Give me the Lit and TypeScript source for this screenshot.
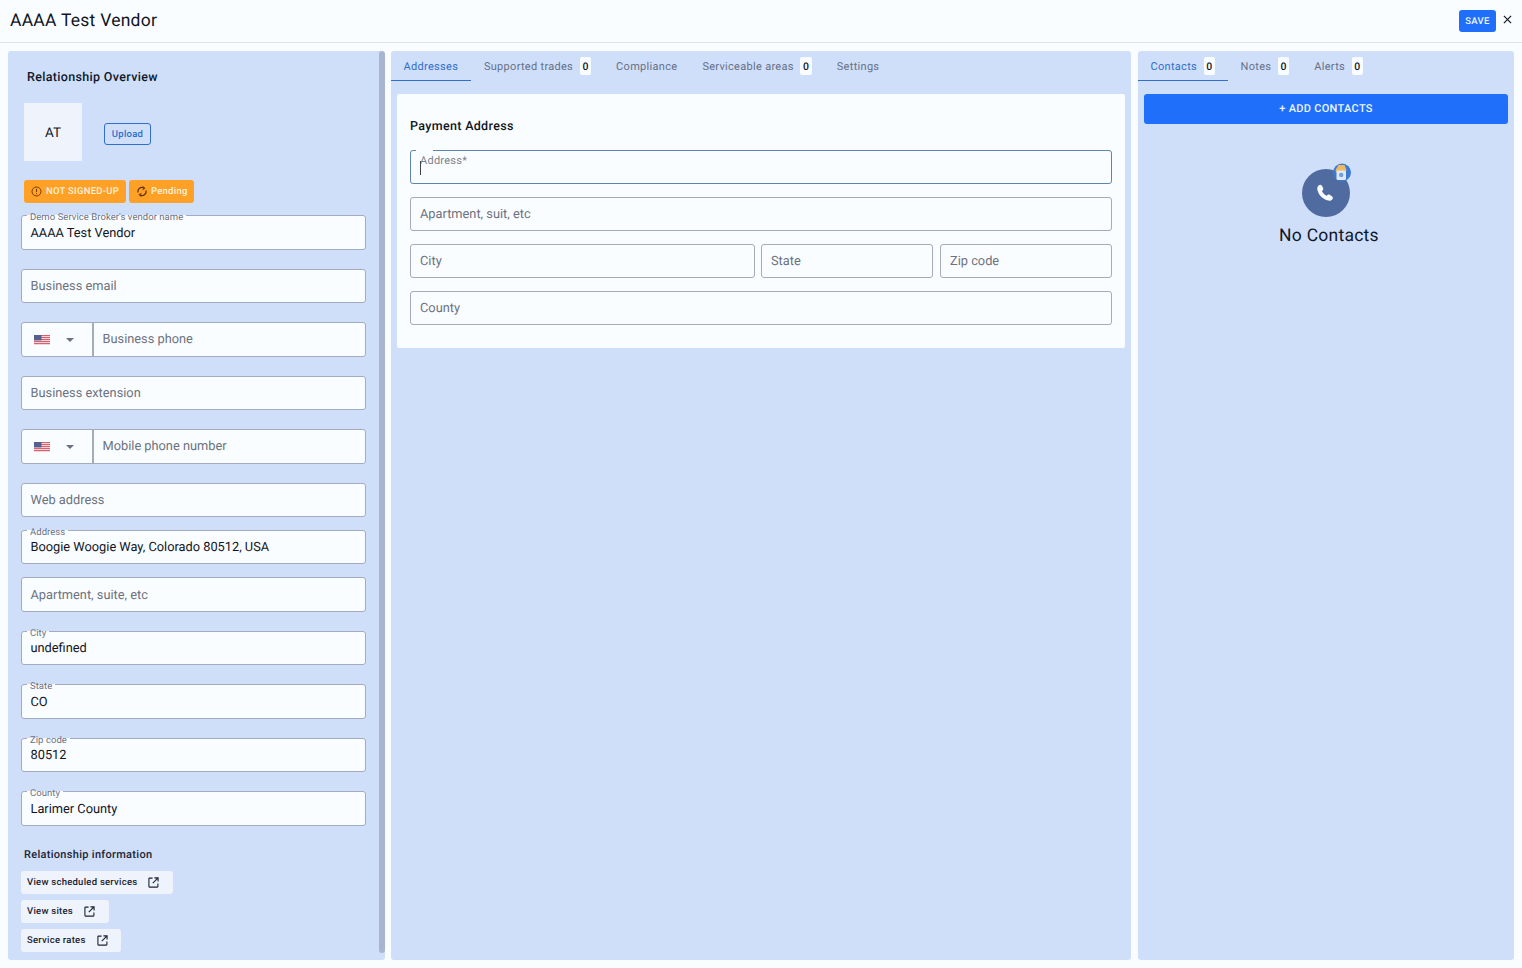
import { LitElement, html, css, svg } from "lit";
import { customElement } from "lit/decorators.js";

const flag = html`<svg class="flag" viewBox="0 0 16 10" width="16" height="10">
  <rect width="16" height="10" fill="#f3e3e8"/>
  ${[0, 2, 4, 6, 8].map((y) => svg`<rect y="${y}" width="16" height="1.1" fill="#d8616b"/>`)}
  <rect width="7.5" height="5.4" fill="#54618f"/>
</svg>`;

const ext = html`<svg class="ext" viewBox="0 0 12 12" width="11" height="11" fill="none" stroke="#1c2433" stroke-width="1.2">
  <path d="M5 1.2H1.6a.6.6 0 0 0-.6.6v8.6a.6.6 0 0 0 .6.6h8.6a.6.6 0 0 0 .6-.6V7"/>
  <path d="M7 1h4v4M11 1 5.2 6.8"/>
</svg>`;

@customElement("app-root")
export class AppRoot extends LitElement {
  static styles = css`
    :host {
      display: block;
      width: 1522px;
      height: 968px;
      overflow: hidden;
      background: #fafdff;
      font-family: Roboto, "Liberation Sans", sans-serif;
      color: #0f1729;
      text-rendering: geometricPrecision;
    }
    * { box-sizing: border-box; }
    .top {
      height: 43px;
      border-bottom: 1px solid #dfe3ea;
      display: flex;
      align-items: center;
      padding: 0 10px 2px 10px;
    }
    .title { font-size: 17.5px; letter-spacing: 0.25px; flex: 1; color: #10151f; padding-top: 2px; }
    .save {
      width: 37px; height: 22px; background: #1f6ffb; color: #f1f6ff; border-radius: 3px;
      font-size: 9.5px; font-weight: 500; letter-spacing: 0.3px;
      display: flex; align-items: center; justify-content: center; margin: 2px 7px 0 0;
    }
    .close { width: 9px; height: 9px; margin-bottom: 2px; }
    .main {
      display: flex; gap: 6px; padding: 8px 8px 0 8px; height: 917px;
    }
    .panel { background: #cfdffa; border-radius: 3px; height: 909px; position: relative; }
    .left { width: 377px; padding: 0 19px 0 13px; overflow: hidden; }
    .mid { width: 740px; }
    .right { width: 376px; margin-left: 1px; }
    .scroll {
      position: absolute; right: 0; top: 0; width: 6px; height: 902px;
      background: #a9b5cf; border-radius: 3px;
    }
    .h1 { font-size: 12.5px; font-weight: 500; letter-spacing: 0.33px; padding: 19px 0 0 6px; line-height: 15px; height: 33px; color: #0f1729; }
    .avatar-row { display: flex; align-items: center; margin: 19px 0 0 3px; }
    .avatar {
      width: 58px; height: 58px; background: #eff3fb; display: flex; align-items: center; justify-content: center;
      font-size: 13.5px; padding-top: 2px;
    }
    .upload {
      margin: 4px 0 0 22px; width: 47px; height: 22px; border: 1px solid #2f6fce; border-radius: 3px;
      color: #2f6fce; font-size: 9.5px; font-weight: 500; letter-spacing: 0.25px;
      display: flex; align-items: center; justify-content: center;
    }
    .tags { display: flex; gap: 3px; margin: 19px 0 0 3px; }
    .tag {
      height: 23px; background: #ffa126; border-radius: 3px; color: #fdf0d8;
      font-size: 9.5px; font-weight: 500; letter-spacing: 0.25px;
      display: flex; align-items: center; gap: 4px; padding: 0 7px 0 7px;
    }
    .tag.pending { gap: 4px; padding: 0 6px 0 8px; }
    .tag svg { flex: none; margin-bottom: 1px; }
    .fields { display: flex; flex-direction: column; margin-top: 12px; }
    .f {
      height: 34.5px; margin-bottom: 19px; border: 1px solid #a3abbd; border-radius: 3px;
      background: #fafdff; display: flex; align-items: center; position: relative;
      font-size: 12.8px; letter-spacing: 0; color: #10151f; padding: 2px 0 0 8.5px;
    }
    .f.tight { margin-bottom: 12.5px; }
    .f.tight13 { margin-bottom: 13px; }
    .ph { color: #6c7280; }
    .lab {
      position: absolute; left: 5px; top: -2px; padding: 0 3px; height: 10px; line-height: 8px;
      font-size: 9.5px; letter-spacing: 0.05px; color: #6c7280;
      background: linear-gradient(#cfdffa 1px, #fafdff 1px);
    }
    .phone { padding: 0; }
    .cc {
      width: 72px; height: 100%; border-right: 2px solid #a3abbd; display: flex; align-items: center;
      padding-left: 12px; flex: none;
    }
    .flag { margin-top: 2px; }
    .caret {
      width: 0; height: 0; border-left: 4.5px solid transparent; border-right: 4.5px solid transparent;
      border-top: 4.5px solid #6c7280; margin: 1px 0 0 16px;
    }
    .phone .ph { margin-left: 8.5px; padding-top: 1px; }
    .h2 { font-size: 11px; font-weight: 500; letter-spacing: 0.3px; margin: 3.5px 0 0 3px; line-height: 14px; color: #1c2433; }
    .links { display: flex; flex-direction: column; align-items: flex-start; gap: 6.5px; margin-top: 9px; }
    .link {
      height: 22.5px; background: #eff3fb; border-radius: 3px; padding: 0 13.5px 0 6px; display: flex; align-items: center; gap: 11px;
      font-size: 9.5px; font-weight: 500; letter-spacing: 0.25px; color: #1c2433;
    }
    .tabs { display: flex; height: 30px; }
    .tab {
      height: 30px; display: flex; align-items: center; gap: 6.5px; font-size: 11px; letter-spacing: 0.3px; color: #677088;
      padding: 1px 12.5px 0; border-bottom: 1px solid transparent;
    }
    .tab.on { color: #2f6fce; border-bottom-color: #2f6fce; padding-right: 13px; }
    .mid .tab.on { padding-right: 13.3px; }
    .n {
      width: 11.5px; height: 18px; background: #fafdff; border-radius: 2px; color: #10151f; font-size: 10.5px; font-weight: 500;
      display: flex; align-items: center; justify-content: center; letter-spacing: 0;
    }
    .card {
      margin: 13px 6px 0 6px; height: 254px; background: #fafdff; border-radius: 2px; padding: 25px 13px 0 13px;
      display: flex; flex-direction: column;
    }
    .card h2 { font-size: 12.5px; font-weight: 500; letter-spacing: 0.33px; margin: 0; line-height: 15px; color: #10151f; }
    .card .f { margin-bottom: 12.5px; flex: none; padding-left: 9px; }
    .card .row { display: flex; gap: 6px; }
    .card .row .f { flex: none; }
    .active {
      margin-top: 16px !important; height: 34px; border-color: #5d86ae; align-items: flex-start;
    }
    .notch { position: absolute; left: 5px; top: -2px; width: 17px; height: 4px; background: #fafdff; }
    .float { position: absolute; left: 9px; top: 4px; font-size: 11px; line-height: 12px; color: #7d8391; letter-spacing: 0.25px; }
    .caretline { position: absolute; left: 9px; top: 10px; width: 1px; height: 14px; background: #3c4250; }
    .add {
      margin: 13px 6px 0 6px; height: 30px; background: #1f6ffb; color: #eef4ff; border-radius: 3px;
      font-size: 11px; font-weight: 500; letter-spacing: 0.3px; display: flex; align-items: center; justify-content: center;
      padding-bottom: 2px;
    }
    .empty { display: flex; flex-direction: column; align-items: center; margin-top: 36px; }
    .ico { width: 60px; height: 60px; margin-left: 4px; }
    .nc { font-size: 17.5px; letter-spacing: 0.25px; margin-top: 5px; margin-left: 6px; line-height: 22px; color: #0f1729; }
  `;

  field(label: string, value: string, cls = "") {
    return html`<div class="f ${cls}">
      ${label ? html`<span class="lab">${label}</span>` : ""}
      <span class="${label ? "val" : "ph"}">${value}</span>
    </div>`;
  }

  phone(ph: string) {
    return html`<div class="f phone">
      <div class="cc">${flag}<span class="caret"></span></div>
      <span class="ph">${ph}</span>
    </div>`;
  }

  tab(name: string, count: number | null, on = false) {
    return html`<div class="tab ${on ? "on" : ""}">${name}${count !== null ? html`<span class="n">${count}</span>` : ""}</div>`;
  }

  render() {
    return html`
      <div class="top">
        <div class="title">AAAA Test Vendor</div>
        <div class="save">SAVE</div>
        <svg class="close" viewBox="0 0 10 10" fill="none" stroke="#10151f" stroke-width="1.3"><path d="M1 1l8 8M9 1 1 9"/></svg>
      </div>
      <div class="main">
        <section class="panel left">
          <div class="scroll"></div>
          <div class="h1">Relationship Overview</div>
          <div class="avatar-row">
            <div class="avatar">AT</div>
            <div class="upload">Upload</div>
          </div>
          <div class="tags">
            <div class="tag">
              <svg width="11" height="11" viewBox="0 0 11 11" fill="none" stroke="#7a3b00" stroke-width="1"><circle cx="5.5" cy="5.5" r="4.5"/><path d="M5.5 2.8v3.2M5.5 7.2v1"/></svg>
              NOT SIGNED-UP
            </div>
            <div class="tag pending">
              <svg width="10" height="11" viewBox="0 0 10 11" fill="none" stroke="#5a2c00" stroke-width="1.2"><path d="M1.2 6.5A3.8 3.8 0 0 1 7 2.2M8.8 4.5A3.8 3.8 0 0 1 3 8.8"/><path d="M6 .4 7.8 2.4 5.6 3.6M4 10.6 2.2 8.6 4.4 7.4" stroke-width="1"/></svg>
              Pending
            </div>
          </div>
          <div class="fields">
            ${this.field("Demo Service Broker's vendor name", "AAAA Test Vendor")}
            ${this.field("", "Business email")}
            ${this.phone("Business phone")}
            ${this.field("", "Business extension")}
            ${this.phone("Mobile phone number")}
            ${this.field("", "Web address", "tight")}
            ${this.field("Address", "Boogie Woogie Way, Colorado 80512, USA", "tight13")}
            ${this.field("", "Apartment, suite, etc")}
            ${this.field("City", "undefined")}
            ${this.field("State", "CO")}
            ${this.field("Zip code", "80512")}
            ${this.field("County", "Larimer County")}
          </div>
          <div class="h2">Relationship information</div>
          <div class="links">
            <div class="link">View scheduled services ${ext}</div>
            <div class="link">View sites ${ext}</div>
            <div class="link">Service rates ${ext}</div>
          </div>
        </section>
        <section class="panel mid">
          <div class="tabs">
            ${this.tab("Addresses", null, true)}
            ${this.tab("Supported trades", 0)}
            ${this.tab("Compliance", null)}
            ${this.tab("Serviceable areas", 0)}
            ${this.tab("Settings", null)}
          </div>
          <div class="card">
            <h2>Payment Address</h2>
            <div class="f active">
              <span class="notch"></span>
              <span class="float">Address*</span>
              <span class="caretline"></span>
            </div>
            <div class="f ph">Apartment, suit, etc</div>
            <div class="row">
              <div class="f ph" style="width:345px">City</div>
              <div class="f ph" style="width:172px">State</div>
              <div class="f ph" style="width:172px;margin-left:1px">Zip code</div>
            </div>
            <div class="f ph">County</div>
          </div>
        </section>
        <section class="panel right">
          <div class="tabs">
            ${this.tab("Contacts", 0, true)}
            ${this.tab("Notes", 0)}
            ${this.tab("Alerts", 0)}
          </div>
          <div class="add">+ ADD CONTACTS</div>
          <div class="empty">
            <svg class="ico" viewBox="0 0 60 60">
              <circle cx="28" cy="33" r="24" fill="#506b9f"/>
              <path transform="translate(0 4)" fill="#fafdff" d="M20.6 21.6c.9-1 2.4-1.1 3.1-.1l1.3 2.2c.5.8.4 1.8-.3 2.5l-.7.8c.7 2 2.7 3.9 4.6 4.8l1-.8c.7-.6 1.7-.6 2.4-.1l2.2 1.5c.9.7.9 2.1 0 3-.9 1-2.4 1.6-3.9 1.2-5.7-1.3-10-5.8-11-11.3-.2-1.4.3-2.8 1.3-3.7z"/>
              <circle cx="44" cy="12.5" r="9" fill="#3a7ad6"/>
              <path fill="#f0b960" d="M37.5 10l3-5h6l2 5-1 2H38z"/>
              <rect x="38.5" y="10.5" width="9.5" height="9.5" rx="1.5" fill="#dfe8f5"/>
              <circle cx="43.2" cy="15" r="2.2" fill="#6f9fe0"/>
            </svg>
            <div class="nc">No Contacts</div>
          </div>
        </section>
      </div>
    `;
  }
}
